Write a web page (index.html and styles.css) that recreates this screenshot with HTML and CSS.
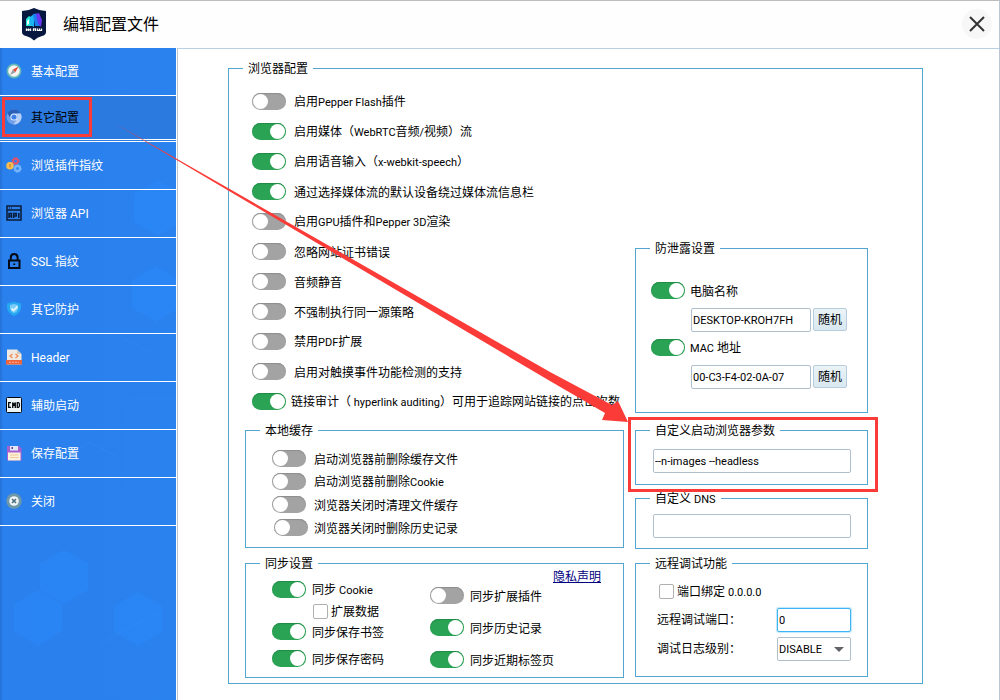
FILE: index.html
```html
<!DOCTYPE html>
<html lang="zh-CN">
<head>
<meta charset="utf-8">
<title>编辑配置文件</title>
<link rel="stylesheet" href="styles.css">
</head>
<body>
<div class="window">
  <header class="titlebar">
    <svg class="logo" viewBox="0 0 26 33" aria-hidden="true">
      <path d="M1 3Q7 3 13 0Q19 3 25 3V24Q25 27 21 28Q16 29 13 32.500Q10 29 5 28Q1 27 1 24Z" fill="#06183f"/>
      <path d="M5 18V11L8 8L11 10V18Z" fill="#25e3d3"/>
      <path d="M9 9L13 6V19L9 17Z" fill="#1bb5f5"/>
      <path d="M12 6L16 5.500L19 18H14Z" fill="#1c7cf0"/>
      <path d="M15 6L18 5L21 12L20 19L17 15Z" fill="#6a35f0"/>
      <path d="M6 13L8 11V16L6 17Z" fill="#e8fffd"/>
      <path d="M5.500 20.500V23M7.500 20.500V23M9.500 20.500V23M12.500 20.500V23M14.500 20.500V23M16.500 20.500V23M18.500 20.500V23M20.500 20.500V23" stroke="#fff" stroke-width="1.300"/>
      <path d="M5 21.800H10M12 21H15M16 22.500H21" stroke="#fff" stroke-width="1"/>
    </svg>
    <h1 class="title">编辑配置文件</h1>
    <button class="close" type="button" aria-label="关闭窗口">
      <svg viewBox="0 0 16 16" aria-hidden="true"><path d="M1 1L15 15M15 1L1 15" stroke="#333" stroke-width="2" fill="none"/></svg>
    </button>
  </header>

  <div class="body">
    <nav class="sidebar">
      <svg class="pattern" viewBox="0 0 176 652" preserveAspectRatio="xMidYMin slice" aria-hidden="true">
        <g fill="#2b8cff" opacity=".4">
          <path d="M64 502L88 515V542L64 556L40 542V515Z"/>
          <path d="M38 542L62 556V583L38 598L14 583V556Z"/>
          <path d="M138 544L162 558V584L138 598L114 584V558Z"/>
          <path d="M158 132L182 146V174L158 188L134 174V146Z"/>
          <path d="M156 218L180 232V260L156 274L132 260V232Z"/>
        </g>
        <path d="M100 596L158 564M122 202V290L150 304M118 350H176M128 358V440M64 434V408L90 394L116 408" fill="none" stroke="#3a94ff" opacity=".25"/>
      </svg>
      <a class="item" href="#">
        <svg class="icon" viewBox="0 0 16 16" aria-hidden="true"><circle cx="8" cy="8" r="7.500" fill="#5fb5b8"/><circle cx="8" cy="8" r="5.800" fill="#f7f3ee"/><path d="M12.500 3.500L9.300 9.300L6.700 6.700Z" fill="#e5473c"/><path d="M4 12L6.700 6.700L9.300 9.300Z" fill="#8fa0a8"/></svg>
        <span class="label">基本配置</span></a>
      <a class="item selected" href="#" aria-current="page">
        <svg class="icon" viewBox="0 0 16 16" aria-hidden="true"><circle cx="8" cy="8" r="7.500" fill="#6f9fe8"/><path d="M1.500 4.200A7.500 7.500 0 0 1 14.600 4.400H8A3.600 3.600 0 0 0 4.700 9.500Z" fill="#2a5fb8"/><path d="M14.600 4.400A7.500 7.500 0 0 1 7.500 15.500L11 10A3.600 3.600 0 0 0 10 4.400Z" fill="#b9d0f6"/><circle cx="8" cy="8" r="3.600" fill="#eaf2ff"/><circle cx="8" cy="8" r="2.600" fill="#3f80e8"/></svg>
        <span class="label">其它配置</span></a>
      <a class="item" href="#">
        <svg class="icon" viewBox="0 0 16 16" aria-hidden="true"><circle cx="9.500" cy="4" r="2.400" fill="none" stroke="#e8506a" stroke-width="1.800"/><circle cx="9.500" cy="4" r="3.500" fill="none" stroke="#e8506a" stroke-dasharray="1.500 1.300"/><circle cx="4" cy="8.800" r="3.800" fill="#f8bd4f"/><path d="M4 7V10.500" stroke="#d9852e" stroke-width="1.400"/><circle cx="11.500" cy="11.500" r="2.500" fill="none" stroke="#74b4fa" stroke-width="2.400"/><circle cx="11.500" cy="11.500" r="3.800" fill="none" stroke="#74b4fa" stroke-dasharray="1.500 1.400"/></svg>
        <span class="label">浏览插件指纹</span></a>
      <a class="item" href="#">
        <svg class="icon" viewBox="0 0 16 16" fill="none" stroke="#0c1b36" aria-hidden="true"><path d="M1 1H15V15H1ZM1 5H15" stroke-width="1.500"/><path d="M3 3H4M5 3H6"/><path d="M3 13V8.500H5.500V13M3 11H5.500M7.800 13V8.500H10.200V11H8M12.800 8V13" stroke-width="1.500"/></svg>
        <span class="label">浏览器 <span class="en">API</span></span></a>
      <a class="item" href="#">
        <svg class="icon" viewBox="0 0 16 16" fill="none" stroke="#050a14" stroke-width="2" aria-hidden="true"><path d="M3 7.500H13.500V15H3Z"/><path d="M4.800 7V4.500Q4.800 1 8.200 1T11.600 4.500V7"/><path d="M8.200 10.500V12"/></svg>
        <span class="label"><span class="en">SSL</span> 指纹</span></a>
      <a class="item" href="#">
        <svg class="icon" viewBox="0 0 16 16" aria-hidden="true"><path d="M1 2.500L8 .8L15 2.500V7Q14 12.500 8 15Q2 12.500 1 7Z" fill="#27a9f2"/><path d="M4 4L8 3L12 4V8Q11 11 8 12Q5 11 4 8Z" fill="#7ccdf7"/><path d="M5.500 7.500L7.500 9.300L11.500 5.700" stroke="#e6f7ff" stroke-width="1.700" fill="none"/></svg>
        <span class="label">其它防护</span></a>
      <a class="item" href="#">
        <svg class="icon" viewBox="0 0 16 16" aria-hidden="true"><path d="M1 .5H11L15.500 5V15.500H1Z" fill="#eee9e2"/><path d="M11 .5L15.500 5H11Z" fill="#cfc6bb"/><path d="M0 11H16V15.500H0Z" fill="#f0643c"/><path d="M6.500 5L4 7L6.500 9M9.500 5L12 7L9.500 9" fill="none" stroke="#f28a4e" stroke-width="1.200"/><path d="M3 13.300H13" stroke="#f9b49d" stroke-dasharray="2 1"/></svg>
        <span class="label"><span class="en">Header</span></span></a>
      <a class="item" href="#">
        <svg class="icon" viewBox="0 0 16 16" aria-hidden="true"><rect x=".5" y=".5" width="15" height="15" rx="1" fill="#edf4f6" stroke="#05080c"/><path d="M5 5.700H2.700V10.300H5M6.700 11V5.500L8 8L9.300 5.500V11M11.300 5.700H12.500Q13.500 6 13.500 8T12.500 10.300H11.300Z" fill="none" stroke="#05080c" stroke-width="1.300"/></svg>
        <span class="label">辅助启动</span></a>
      <a class="item" href="#">
        <svg class="icon" viewBox="0 0 16 16" aria-hidden="true"><path d="M1 1H13L15.500 3.500V15.500H1Z" fill="#a85fd0"/><path d="M4 1H12V5.500H4Z" fill="#dfe8f4"/><path d="M5.500 2H7V4H5.500Z" fill="#6a3c96"/><path d="M2 7.500H14.500V15.500H2Z" fill="#fbf1dc"/><path d="M4 10H12.500M4 12.500H12.500" stroke="#edcb93"/></svg>
        <span class="label">保存配置</span></a>
      <a class="item" href="#">
        <svg class="icon" viewBox="0 0 16 16" aria-hidden="true"><circle cx="8" cy="8" r="7.700" fill="#6e98a8"/><circle cx="8" cy="8" r="4.800" fill="#f2f5f6"/><path d="M6 6L10 10M10 6L6 10" stroke="#4f7282" stroke-width="1.700"/></svg>
        <span class="label">关闭</span></a>
    </nav>

    <main class="main">
      <fieldset class="group outer">
        <legend>浏览器配置</legend>
        <div class="columns">
          <div class="left">
            <div class="switches">
              <label class="row"><input class="toggle" type="checkbox" role="switch"><span>启用<span class="en">Pepper Flash</span>插件</span></label>
              <label class="row"><input class="toggle" type="checkbox" role="switch" checked><span>启用媒体（<span class="en">WebRTC</span>音频<span class="en">/</span>视频）流</span></label>
              <label class="row"><input class="toggle" type="checkbox" role="switch" checked><span>启用语音输入（<span class="en">x-webkit-speech</span>）</span></label>
              <label class="row"><input class="toggle" type="checkbox" role="switch" checked><span>通过选择媒体流的默认设备绕过媒体流信息栏</span></label>
              <label class="row"><input class="toggle" type="checkbox" role="switch"><span>启用<span class="en">GPU</span>插件和<span class="en">Pepper 3D</span>渲染</span></label>
              <label class="row"><input class="toggle" type="checkbox" role="switch"><span>忽略网站证书错误</span></label>
              <label class="row"><input class="toggle" type="checkbox" role="switch"><span>音频静音</span></label>
              <label class="row"><input class="toggle" type="checkbox" role="switch"><span>不强制执行同一源策略</span></label>
              <label class="row"><input class="toggle" type="checkbox" role="switch"><span>禁用<span class="en">PDF</span>扩展</span></label>
              <label class="row"><input class="toggle" type="checkbox" role="switch"><span>启用对触摸事件功能检测的支持</span></label>
              <label class="row tight"><input class="toggle" type="checkbox" role="switch" checked><span>链接审计（<span class="en"> hyperlink auditing</span>）可用于追踪网站链接的点击次数</span></label>
            </div>

            <fieldset class="group cache">
              <legend>本地缓存</legend>
              <label class="row"><input class="toggle" type="checkbox" role="switch"><span>启动浏览器前删除缓存文件</span></label>
              <label class="row"><input class="toggle" type="checkbox" role="switch"><span>启动浏览器前删除<span class="en">Cookie</span></span></label>
              <label class="row"><input class="toggle" type="checkbox" role="switch"><span>浏览器关闭时清理文件缓存</span></label>
              <label class="row indent"><input class="toggle" type="checkbox" role="switch"><span>浏览器关闭时删除历史记录</span></label>
            </fieldset>

            <fieldset class="group sync">
              <legend>同步设置</legend>
              <div class="sync-grid">
                <div class="sync-left">
                  <label class="row"><input class="toggle" type="checkbox" role="switch" checked><span>同步 <span class="en">Cookie</span></span></label>
                  <label class="check-row"><input class="check" type="checkbox"><span>扩展数据</span></label>
                  <label class="row"><input class="toggle" type="checkbox" role="switch" checked><span>同步保存书签</span></label>
                  <label class="row last"><input class="toggle" type="checkbox" role="switch" checked><span>同步保存密码</span></label>
                </div>
                <div class="sync-right">
                  <a class="privacy" href="#">隐私声明</a>
                  <label class="row"><input class="toggle" type="checkbox" role="switch"><span>同步扩展插件</span></label>
                  <label class="row"><input class="toggle" type="checkbox" role="switch" checked><span>同步历史记录</span></label>
                  <label class="row"><input class="toggle" type="checkbox" role="switch" checked><span>同步近期标签页</span></label>
                </div>
              </div>
            </fieldset>
          </div>

          <div class="right">
            <fieldset class="group leak">
              <legend>防泄露设置</legend>
              <label class="row"><input class="toggle" type="checkbox" role="switch" checked><span>电脑名称</span></label>
              <div class="field-row">
                <input class="text" type="text" value="DESKTOP-KROH7FH" aria-label="电脑名称">
                <button class="random" type="button">随机</button>
              </div>
              <label class="row"><input class="toggle" type="checkbox" role="switch" checked><span><span class="en">MAC</span> 地址</span></label>
              <div class="field-row">
                <input class="text" type="text" value="00-C3-F4-02-0A-07" aria-label="MAC 地址">
                <button class="random" type="button">随机</button>
              </div>
            </fieldset>

            <fieldset class="group params">
              <legend>自定义启动浏览器参数</legend>
              <input class="text" type="text" value="--n-images --headless" aria-label="自定义启动浏览器参数">
            </fieldset>

            <fieldset class="group dns">
              <legend>自定义 <span class="en">DNS</span></legend>
              <input class="text" type="text" aria-label="自定义 DNS">
            </fieldset>

            <fieldset class="group debug">
              <legend>远程调试功能</legend>
              <label class="check-row"><input class="check" type="checkbox"><span>端口绑定 <span class="en">0.0.0.0</span></span></label>
              <div class="pair">
                <label for="port">远程调试端口：</label>
                <input class="text focused" id="port" type="text" value="0">
              </div>
              <div class="pair">
                <label for="level">调试日志级别：</label>
                <span class="select-wrap"><select class="select" id="level"><option>DISABLE</option></select></span>
              </div>
            </fieldset>
          </div>
        </div>
      </fieldset>
    </main>
  </div>

  <svg class="annotation" viewBox="0 0 1000 700" fill="none" aria-hidden="true">
    <rect x="3.500" y="98.500" width="87" height="37" stroke="#fb3b38" stroke-width="3"/>
    <rect x="629.500" y="418.500" width="247" height="72" stroke="#fb3b38" stroke-width="3"/>
    <path d="M115 123.500L550 372L612 405L618 401L628 422L602 420L605 413L550 381Z" fill="#fb3b38"/>
  </svg>
</div>
</body>
</html>
```
FILE: styles.css
```css
* { box-sizing: border-box; }

body {
  margin: 0;
  background: #fff;
  color: #000;
  font: 12px/16px Roboto, "Noto Sans CJK SC", sans-serif;
}

.en { font-size: 11px; white-space: pre; }

.window {
  position: relative;
  display: flex;
  flex-direction: column;
  min-height: 100vh;
  border-top: 1px solid #bdbdbd;
  border-right: 1px solid #b9c6d3;
  border-bottom: 1px solid #b9c6d3;
}

.titlebar {
  display: flex;
  align-items: center;
  height: 47px;
  padding: 0 7px 0 21px;
  background: #fefefe;
}

.logo { width: 26px; height: 33px; }

.title {
  flex: 1;
  margin: 0 0 0 16px;
  font-size: 16px;
  line-height: 24px;
  font-weight: 400;
}

.close {
  display: grid;
  place-items: center;
  width: 30px;
  height: 30px;
  margin-bottom: 2px;
  padding: 0;
  border: 0;
  border-radius: 50%;
  background: #f7f7f7;
}
.close svg { width: 16px; height: 16px; }

.body { flex: 1; display: flex; }

.sidebar {
  position: relative;
  flex: none;
  width: 176px;
  background: linear-gradient(90deg, #2470d4, #2a80ec 3px, #2a82ee);
}
.pattern { position: absolute; inset: 0; width: 100%; height: 100%; }

.item {
  position: relative;
  display: flex;
  align-items: center;
  gap: 9px;
  height: 48px;
  padding: 0 0 1px 6px;
  border-bottom: 1px solid #fff;
  color: #fff;
  text-decoration: none;
}
.item .en { font-size: 12px; }
.item.selected {
  height: 46px;
  border-bottom: 3px double #fff;
  background: #2a7ae0;
  color: #000;
}
.icon { flex: none; width: 16px; height: 16px; }
.label { padding-top: 2px; }

.main {
  flex: 1;
  min-width: 0;
  margin-left: 1px;
  padding: 10px 76px 16px 50px;
  border-left: 1px solid #b9c6d3;
  border-top: 1px solid #b9d0e4;
}

.group {
  --inset: 0px;
  min-width: 0;
  margin: 0;
  padding: 0 0 0 var(--inset);
  border: 1px solid #54a5cf;
}
.group > legend {
  margin-left: calc(14px - var(--inset));
  padding: 2px 5px 0;
  line-height: 16px;
}

.columns {
  display: grid;
  grid-template-columns: 379fr 233fr;
  column-gap: 11px;
  padding: 16px 54px 5px 16px;
}
.left, .right { min-width: 0; }
.right { padding-top: 146px; }

.row {
  display: flex;
  align-items: center;
  gap: 8px;
  height: 17px;
  white-space: nowrap;
}
.row > span, .check-row > span { padding-top: 2px; }
.switches {
  display: grid;
  gap: 13px;
  padding-left: 7px;
}
.tight { gap: 5px; }

.toggle {
  appearance: none;
  flex: none;
  display: flex;
  width: 34px;
  height: 17px;
  margin: 0;
  padding: 1px;
  border-radius: 9px;
  background: #a3a3a3;
  box-shadow: inset 0 1px 1px #8d8d8d;
}
.toggle::before {
  content: "";
  width: 15px;
  height: 15px;
  border-radius: 50%;
  background: #fff;
}
.toggle:checked {
  justify-content: flex-end;
  background: #2aa354;
  box-shadow: inset 0 1px 1px #208a45;
}

.cache {
  --inset: 26px;
  display: grid;
  gap: 6px;
  margin-top: 11px;
  padding-top: 11px;
  padding-bottom: 11px;
}
.cache .indent { padding-left: 2px; gap: 6px; }

.sync { margin-top: 6px; }
.sync-grid {
  display: grid;
  grid-template-columns: 158fr 171fr;
  padding: 0 22px 9px 26px;
}
.sync .row { gap: 6px; }
.sync-left { padding-top: 9px; }
.sync-left .check-row { margin: 5px 0 4px 41px; }
.sync-left .last { margin-top: 10px; }
.sync-right {
  display: grid;
  align-content: start;
  gap: 15px;
}
.privacy {
  justify-self: end;
  margin: -3px 0 -13px;
  color: #000080;
}

.check-row {
  display: flex;
  align-items: center;
  gap: 3px;
  height: 16px;
  white-space: nowrap;
}
.check {
  appearance: none;
  width: 15px;
  height: 15px;
  margin: 0;
  border: 1px solid #b0b0b0;
  border-radius: 2px;
  background: #fff;
}

.text, .select {
  min-width: 0;
  width: 100%;
  height: 24px;
  padding: 0 1px;
  border: 1px solid #b0bfcc;
  border-radius: 2px;
  outline: 0;
  background: #fff;
  color: #000;
  font: 11px Roboto, "Noto Sans CJK SC", sans-serif;
}
.text.focused { border-color: #3db4f5; box-shadow: 0 0 1px 1px #bfe6fb; }

.leak {
  --inset: 15px;
  padding-top: 25px;
  padding-right: 20px;
  padding-bottom: 16px;
}
.leak .row { gap: 5px; }
.field-row {
  display: flex;
  gap: 2px;
  margin: 9px 0 7px 40px;
}
.field-row .text { flex: 1; }
.random {
  flex: none;
  width: 34px;
  height: 23px;
  padding: 1px 0 0;
  border: 1px solid #b8cddb;
  border-radius: 2px;
  background: linear-gradient(#eaf3f6, #d9e8f1);
  color: #000;
  font: inherit;
}

.params, .dns { --inset: 17px; padding-right: 16px; }
.params { margin-top: 8px; padding-top: 10px; padding-bottom: 11px; }
.dns { margin-top: 4px; padding-top: 6px; padding-bottom: 10px; }
.params .text, .dns .text { display: block; }

.debug {
  --inset: 21px;
  margin-top: 5px;
  padding-top: 11px;
  padding-right: 16px;
  padding-bottom: 15px;
}
.debug .check-row { margin: 0 0 9px 2px; }
.pair {
  display: flex;
  align-items: center;
  justify-content: space-between;
  margin-bottom: 5px;
}
.pair:last-child { margin-bottom: 0; }
.pair .text, .select-wrap { flex: none; width: 74px; }
.select-wrap { position: relative; }
.select { display: block; appearance: none; }
.select-wrap::after {
  content: "";
  position: absolute;
  right: 7px;
  top: 10px;
  border: 5px solid transparent;
  border-top-color: #606468;
  border-bottom: 0;
  pointer-events: none;
}

.annotation {
  position: absolute;
  top: -1px;
  left: 0;
  width: 1000px;
  height: 700px;
  pointer-events: none;
}
```
